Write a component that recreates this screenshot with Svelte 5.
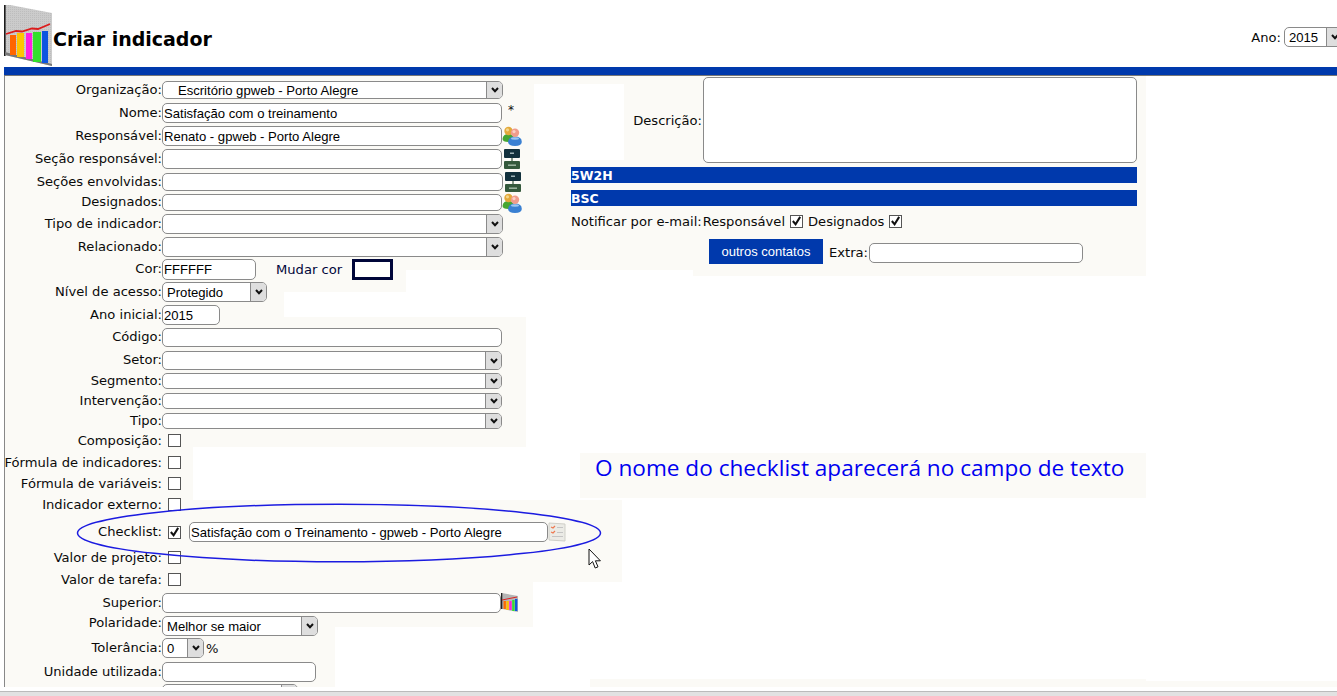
<script lang="ts">
  type Row = {
    label: string;
    kind: 'input' | 'select' | 'check' | 'cor' | 'checklist';
    y: number;
    h: number;
    w?: number;
    value?: string;
    icon?: 'people' | 'org' | 'chart';
    mark?: string;
    suffix?: string;
    on?: boolean;
    top?: boolean;
  };

  const rows: Row[] = [
    { label: 'Organização:', kind: 'select', y: 81, h: 18, w: 341, value: '\u00a0\u00a0\u00a0Escritório gpweb - Porto Alegre' },
    { label: 'Nome:', kind: 'input', y: 103, h: 20, w: 340, value: 'Satisfação com o treinamento', mark: '*' },
    { label: 'Responsável:', kind: 'input', y: 126, h: 20, w: 340, value: 'Renato - gpweb - Porto Alegre', icon: 'people' },
    { label: 'Seção responsável:', kind: 'input', y: 149, h: 20, w: 340, icon: 'org' },
    { label: 'Seções envolvidas:', kind: 'input', y: 173, h: 18, w: 341, icon: 'org' },
    { label: 'Designados:', kind: 'input', y: 194, h: 17, w: 340, icon: 'people' },
    { label: 'Tipo de indicador:', kind: 'select', y: 214, h: 20, w: 341 },
    { label: 'Relacionado:', kind: 'select', y: 237, h: 20, w: 341 },
    { label: 'Cor:', kind: 'cor', y: 259, h: 21, w: 94, value: 'FFFFFF' },
    { label: 'Nível de acesso:', kind: 'select', y: 282, h: 20, w: 105, value: 'Protegido' },
    { label: 'Ano inicial:', kind: 'input', y: 305, h: 20, w: 58, value: '2015' },
    { label: 'Código:', kind: 'input', y: 328, h: 19, w: 340 },
    { label: 'Setor:', kind: 'select', y: 351, h: 19, w: 340 },
    { label: 'Segmento:', kind: 'select', y: 373, h: 16, w: 340 },
    { label: 'Intervenção:', kind: 'select', y: 393, h: 16, w: 340 },
    { label: 'Tipo:', kind: 'select', y: 413, h: 16, w: 340 },
    { label: 'Composição:', kind: 'check', y: 434, h: 13 },
    { label: 'Fórmula de indicadores:', kind: 'check', y: 456, h: 13 },
    { label: 'Fórmula de variáveis:', kind: 'check', y: 477, h: 13 },
    { label: 'Indicador externo:', kind: 'check', y: 498, h: 13 },
    { label: 'Checklist:', kind: 'checklist', y: 522, h: 20, w: 359, value: 'Satisfação com o Treinamento - gpweb - Porto Alegre', on: true },
    { label: 'Valor de projeto:', kind: 'check', y: 551, h: 13 },
    { label: 'Valor de tarefa:', kind: 'check', y: 573, h: 13 },
    { label: 'Superior:', kind: 'input', y: 593, h: 20, w: 339, icon: 'chart' },
    { label: 'Polaridade:', kind: 'select', y: 616, h: 20, w: 156, value: 'Melhor se maior', top: true },
    { label: 'Tolerância:', kind: 'select', y: 638, h: 20, w: 42, value: '0', suffix: '%' },
    { label: 'Unidade utilizada:', kind: 'input', y: 662, h: 20, w: 154 },
    { label: '', kind: 'select', y: 684, h: 20, w: 136 }
  ];

  // each row runs down to the top of the next one
  const rowHeight = (i: number) => (rows[i + 1] ? rows[i + 1].y - rows[i].y : 20);
</script>

{#snippet chevron()}
  <span class="arrow">
    <svg width="8" height="6" viewBox="0 0 8 6"><path d="M1 1 L4 4.2 L7 1" fill="none" stroke="#111" stroke-width="2" /></svg>
  </span>
{/snippet}

{#snippet box(on: boolean)}
  <span class="cb">
    {#if on}
      <svg width="12" height="12" viewBox="0 0 12 12"><path d="M2 6 L5 9.5 L10 1.5" fill="none" stroke="#111" stroke-width="2.2" /></svg>
    {/if}
  </span>
{/snippet}

{#snippet people()}
  <svg class="icon" width="20" height="20" viewBox="0 0 20 20">
    <path d="M0.5 13 Q1 8 6.5 8 Q12 8 12 13 Q12 16 6.5 16 Q0.5 16 0.5 13Z" fill="#45a632" />
    <circle cx="6.5" cy="5" r="4.2" fill="#e3a93a" />
    <circle cx="5.5" cy="3.8" r="1.6" fill="#f3d68c" />
    <path d="M6 16 Q6.5 10.5 13 10.5 Q19.8 10.5 19.8 16 Q19.5 20 13 20 Q6.5 20 6 16Z" fill="#3a80d2" />
    <ellipse cx="13" cy="12.5" rx="4" ry="1.2" fill="#9cc6f0" />
    <circle cx="13" cy="6.8" r="4.2" fill="#ef9c8c" />
    <circle cx="12" cy="5.6" r="1.6" fill="#f9d0c6" />
  </svg>
{/snippet}

{#snippet org()}
  <svg class="icon org" width="18" height="22" viewBox="0 0 18 22">
    <rect x="1" y="1" width="16" height="9" rx="1" fill="#12303c" />
    <rect x="7" y="4.5" width="4" height="1.5" fill="#9fb3b8" />
    <rect x="8.4" y="10" width="1.2" height="3" fill="#3a5a40" />
    <rect x="1" y="13" width="16" height="8" rx="1" fill="#34593c" />
    <rect x="5" y="16.5" width="8" height="1.4" fill="#a6bda9" />
  </svg>
{/snippet}

{#snippet chart()}
  <svg class="icon" width="18" height="20" viewBox="0 0 18 20">
    <path d="M1 0 L17 3 L17 19 L1 16Z" fill="#b5b5b5" />
    <rect x="0" y="0" width="1.3" height="16" fill="#222" />
    <rect x="2.5" y="8" width="2.4" height="8" fill="#ff6a00" />
    <rect x="5.4" y="8" width="2.4" height="9" fill="#ffc000" />
    <rect x="8.3" y="8" width="2.4" height="9" fill="#ff22dd" />
    <rect x="11.2" y="7" width="2.4" height="11" fill="#33dd33" />
    <rect x="14" y="6" width="2.4" height="12" fill="#1155dd" />
    <path d="M1 7 L16 4" stroke="#d22" stroke-width="1" />
  </svg>
{/snippet}

<div class="page">
  <header class="top">
    <div class="brand">
      <svg class="logo" width="50" height="62" viewBox="0 0 50 62">
        <defs>
          <pattern id="grid" width="2" height="2" patternUnits="userSpaceOnUse">
            <rect width="2" height="2" fill="#cbcbcb" />
            <rect width="1" height="1" fill="#bdbdbd" />
          </pattern>
        </defs>
        <path d="M1 -1 L48 8 L48 61 L1 50Z" fill="url(#grid)" />
        <rect x="0" y="0" width="1.6" height="51" fill="#1c1c1c" />
        <path d="M1 50 L48 61 L48 59 L1 47Z" fill="#777" />
        <rect x="6" y="30" width="6" height="20" fill="#ff6600" />
        <rect x="13" y="28" width="7" height="24" fill="#ffc400" />
        <rect x="22" y="28" width="6" height="26" fill="#ff1fe0" />
        <rect x="29" y="27" width="8" height="30" fill="#33e02c" />
        <rect x="38" y="26" width="6" height="32" fill="#0c55e0" />
        <path d="M2 29 L12 26 L18 26.5 L28 23.5 L34 24 L46 19" fill="none" stroke="#dc1c1c" stroke-width="1.8" />
      </svg>
      <h1>Criar indicador</h1>
    </div>
    <div class="year">
      <label for="ano">Ano:</label>
      <div class="sel year-sel">
        <select id="ano"><option>2015</option></select>
        {@render chevron()}
      </div>
    </div>
  </header>

  <div class="rule"></div>

  <main class="body">
    <div class="left">
      {#each rows as row, i}
        <div class="row" style="height:{rowHeight(i)}px">
          <span class="label" class:label-raised={row.kind !== 'check'} style="height:{row.top ? 14 : row.h}px">{row.label}</span>
          <div class="controls" style="height:{row.h}px">
            {#if row.kind === 'input'}
              <input class="field" style="width:{row.w}px" value={row.value ?? ''} />
            {:else if row.kind === 'select'}
              <div class="sel" style="width:{row.w}px">
                <select><option>{row.value ?? ''}</option></select>
                {@render chevron()}
              </div>
            {:else if row.kind === 'check'}
              {@render box(false)}
            {:else if row.kind === 'cor'}
              <input class="field" style="width:{row.w}px" value={row.value} />
              <span class="mudar">Mudar cor</span>
              <span class="swatch"></span>
            {:else if row.kind === 'checklist'}
              {@render box(true)}
              <input class="field checklist-field" style="width:{row.w}px" value={row.value} />
              <svg class="icon" width="18" height="20" viewBox="0 0 18 20">
                <path d="M1 1 L17 2 L17 19 L1 18Z" fill="#ebebe6" stroke="#cfcfc8" />
                <path d="M3 5 L5 6 L7 4 M3 10 L5 11 L7 9" fill="none" stroke="#ee7a52" stroke-width="1.2" />
                <path d="M9 5.5 H15 M9 10.5 H15 M4 14.5 H15" stroke="#c4c4c4" />
              </svg>
            {/if}
            {#if row.icon === 'people'}{@render people()}{/if}
            {#if row.icon === 'org'}{@render org()}{/if}
            {#if row.icon === 'chart'}{@render chart()}{/if}
            {#if row.mark}<span class="mark">{row.mark}</span>{/if}
            {#if row.suffix}<span class="suffix">{row.suffix}</span>{/if}
          </div>
        </div>
      {/each}
    </div>

    <div class="right">
      <div class="desc">
        <span class="desc-label">Descrição:</span>
        <textarea></textarea>
      </div>
      <div class="band">5W2H</div>
      <div class="band">BSC</div>
      <div class="notify">
        <span>Notificar por e-mail:</span>
        <span class="notify-first">Responsável</span>
        {@render box(true)}
        <span>Designados</span>
        {@render box(true)}
      </div>
      <div class="extra">
        <button type="button">outros contatos</button>
        <span class="extra-label">Extra:</span>
        <input class="field extra-field" />
      </div>
      <p class="callout">O nome do checklist aparecerá no campo de texto</p>
    </div>

    <svg class="ring" width="530" height="62" viewBox="0 0 530 62">
      <ellipse cx="265" cy="31" rx="261.5" ry="28.8" fill="none" stroke="#1b1be0" stroke-width="1.5" />
    </svg>
    <svg class="cursor" width="14" height="22" viewBox="0 0 14 22">
      <path d="M1 1 V17 L4.6 13.6 L7.2 20 L10 18.8 L7.4 12.8 H12.4Z" fill="#fff" stroke="#111" stroke-width="1" />
    </svg>
  </main>

  <footer class="status"></footer>
</div>

<style>
  :global(body) {
    margin: 0;
    background: #fff;
  }

  .page {
    --tint: linear-gradient(#fbfaf6, #fbfaf6);
    width: 1337px;
    height: 696px;
    overflow: hidden;
    display: flex;
    flex-direction: column;
    font-family: 'DejaVu Sans', sans-serif;
    font-size: 13.1px;
    color: #0a0a0a;
  }

  .top {
    height: 67px;
    flex: none;
    display: flex;
    justify-content: space-between;
    padding-left: 4px;
    box-sizing: border-box;
  }

  .brand {
    display: flex;
    align-items: flex-start;
  }

  .logo {
    margin-top: 5px;
    margin-right: -1px;
  }

  h1 {
    margin: 27px 0 0;
    font-size: 19px;
    font-weight: 700;
    line-height: 24px;
    color: #000;
  }

  .year {
    display: flex;
    align-items: center;
    gap: 3px;
    height: 20px;
    margin-top: 27px;
    margin-right: -6px;
  }

  .year-sel {
    width: 59px;
    height: 20px;
  }

  .rule {
    height: 9px;
    flex: none;
    margin-left: 4px;
    background: #0039ac;
    border-bottom: 1px solid #777;
    box-sizing: border-box;
  }

  .body {
    height: 611px;
    flex: none;
    position: relative;
    display: flex;
    margin-left: 4px;
    border-left: 1px solid #888;
    overflow: hidden;
    background-color: #fff;
    background-repeat: no-repeat;
    background-image:
      var(--tint), var(--tint), var(--tint), var(--tint), var(--tint),
      var(--tint), var(--tint), var(--tint), var(--tint), var(--tint),
      var(--tint), var(--tint), var(--tint), var(--tint), var(--tint);
    background-size:
      529px 194px, 612px 8px, 522px 76px, 612px 110px,
      453px 6px, 401px 22px, 279px 25px, 521px 130px,
      188px 53px, 566px 45px, 617px 82px, 528px 45px,
      330px 60px, 556px 8px, 191px 6px;
    background-position:
      0 0, 529px 0, 619px 8px, 529px 84px,
      688px 194px, 0 194px, 0 216px, 0 241px,
      0 371px, 575px 377px, 0 424px, 0 506px,
      0 551px, 585px 603px, 1141px 605px;
  }

  .left {
    width: 566px;
    flex: none;
    padding-top: 5px;
  }

  .row {
    display: flex;
    align-items: flex-start;
  }

  .label {
    width: 157px;
    flex: none;
    box-sizing: border-box;
    display: flex;
    align-items: center;
    justify-content: flex-end;
    white-space: nowrap;
  }

  .label-raised {
    padding-bottom: 2px;
  }

  .controls {
    display: flex;
    align-items: center;
  }

  .field {
    box-sizing: border-box;
    height: 100%;
    padding: 0 1px;
    border: 1px solid #8a8a8a;
    border-radius: 5px;
    background: #fff;
    font-family: 'Liberation Sans', sans-serif;
    font-size: 13.1px;
    color: #000;
    outline: none;
  }

  .sel {
    box-sizing: border-box;
    height: 100%;
    display: flex;
    border: 1px solid #8a8a8a;
    border-radius: 5px;
    background: #fff;
    overflow: hidden;
  }

  .sel select {
    flex: 1;
    min-width: 0;
    appearance: none;
    border: 0;
    padding: 0 4px;
    background: transparent;
    font-family: 'Liberation Sans', sans-serif;
    font-size: 13.1px;
    color: #000;
    outline: none;
  }

  .arrow {
    flex: none;
    width: 15px;
    display: flex;
    align-items: center;
    justify-content: center;
    background: #dedede;
    border-left: 1px solid #8a8a8a;
  }

  .cb {
    box-sizing: border-box;
    width: 13px;
    height: 13px;
    flex: none;
    margin-left: 6px;
    display: flex;
    align-items: center;
    justify-content: center;
    border: 1px solid #555;
    background: #fff;
  }

  .icon {
    flex: none;
  }

  .org {
    margin-left: 1px;
  }

  .mark {
    margin-left: 6px;
    font-size: 12px;
    align-self: flex-start;
  }

  .suffix {
    margin-left: 2px;
  }

  .mudar {
    margin-left: 20px;
    color: #00063a;
  }

  .swatch {
    box-sizing: border-box;
    width: 41px;
    height: 21px;
    margin-left: 10px;
    border: 3px solid #00063a;
    background: #fff;
  }

  .checklist-field {
    margin-left: 8px;
  }

  .right {
    width: 566px;
    flex: none;
  }

  .desc {
    display: flex;
    justify-content: flex-end;
    align-items: center;
    height: 87px;
  }

  .desc-label {
    margin-right: 1px;
    padding-top: 2px;
  }

  textarea {
    box-sizing: border-box;
    width: 434px;
    height: 86px;
    padding: 0;
    border: 1px solid #8a8a8a;
    border-radius: 5px;
    background: #fff;
    resize: none;
    outline: none;
  }

  .band {
    height: 16px;
    margin-top: 4px;
    background: #0039ac;
    color: #fff;
    font-weight: 700;
    font-size: 12.5px;
    line-height: 18px;
  }

  .band + .band {
    margin-top: 7px;
  }

  .notify {
    display: flex;
    align-items: center;
    height: 18px;
    margin-top: 6px;
    white-space: nowrap;
  }

  .notify-first {
    margin-left: 1px;
  }

  .notify .cb {
    margin: 0 5px;
  }

  .extra {
    display: flex;
    align-items: center;
    margin-top: 9px;
    padding-left: 138px;
    height: 25px;
  }

  button {
    width: 114px;
    height: 25px;
    padding: 0;
    border: 0;
    background: #0039ac;
    color: #fff;
    font-family: 'Liberation Sans', sans-serif;
    font-size: 13px;
  }

  .extra-label {
    margin: 2px 0 0 6px;
  }

  .extra-field {
    width: 214px;
    height: 20px;
    margin: 2px 0 0 1px;
  }

  .callout {
    margin: 188px 0 0 24px;
    color: #0000f0;
    font-family: 'Open Sans', sans-serif;
    font-size: 22.6px;
    line-height: 32px;
    white-space: nowrap;
  }

  .ring {
    position: absolute;
    left: 69px;
    top: 426px;
  }

  .cursor {
    position: absolute;
    left: 583px;
    top: 472px;
  }

  .status {
    height: 5px;
    flex: none;
    margin-top: 4px;
    background: #e2e2e2;
    border-top: 1px solid #bbb;
  }
</style>
